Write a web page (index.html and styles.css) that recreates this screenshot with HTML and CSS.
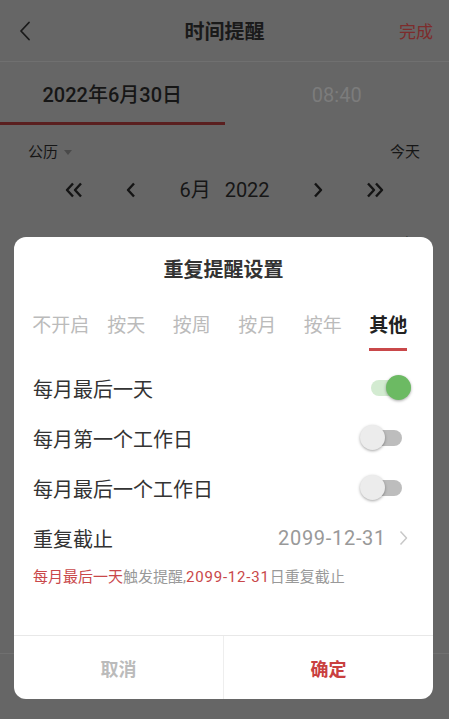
FILE: index.html
```html
<!DOCTYPE html>
<html lang="zh-CN">
<head>
    <meta charset="UTF-8">
    <meta name="viewport" content="width=device-width, initial-scale=1.0">
    <title>时间提醒</title>
    <link rel="stylesheet" href="styles.css">
</head>
<body>
    <div class="page">
        <header class="topbar">
            <span class="back">
                <svg width="12" height="20" viewBox="0 0 12 20"><path d="M10 1.5 L2 10 L10 18.5" fill="none" stroke="#1a1a1a" stroke-width="1.8" stroke-linecap="round" stroke-linejoin="round"/></svg>
            </span>
            <h1>时间提醒</h1>
            <a class="done" href="#">完成</a>
        </header>

        <div class="datetabs">
            <div class="datetab active">2022年6月30日</div>
            <div class="datetab">08:40</div>
        </div>

        <div class="calbar">
            <span class="cal-type">公历 <i class="caret"></i></span>
            <span>今天</span>
        </div>

        <div class="monthnav">
            <svg width="18" height="16" viewBox="0 0 18 16"><path d="M8 1.5 L2 8 L8 14.5 M16 1.5 L10 8 L16 14.5" fill="none" stroke="#141414" stroke-width="2.4" stroke-linejoin="round"/></svg>
            <svg width="10" height="16" viewBox="0 0 10 16"><path d="M8 1.5 L2 8 L8 14.5" fill="none" stroke="#141414" stroke-width="2.4" stroke-linejoin="round"/></svg>
            <span class="month-label"><span>6月</span><span>2022</span></span>
            <svg width="10" height="16" viewBox="0 0 10 16"><path d="M2 1.5 L8 8 L2 14.5" fill="none" stroke="#141414" stroke-width="2.4" stroke-linejoin="round"/></svg>
            <svg width="18" height="16" viewBox="0 0 18 16"><path d="M2 1.5 L8 8 L2 14.5 M10 1.5 L16 8 L10 14.5" fill="none" stroke="#141414" stroke-width="2.4" stroke-linejoin="round"/></svg>
        </div>

        <div class="weekdays">
            <span>日</span><span>一</span><span>二</span><span>三</span><span>四</span><span>五</span><span>六</span>
        </div>
        <div class="calgrid"></div>
    </div>

    <!-- 重复提醒弹窗 -->
    <div class="dialog">
        <div class="dialog-title">重复提醒设置</div>

        <div class="repeat-tabs">
            <div class="repeat-tab"><span>不开启</span></div>
            <div class="repeat-tab"><span>按天</span></div>
            <div class="repeat-tab"><span>按周</span></div>
            <div class="repeat-tab"><span>按月</span></div>
            <div class="repeat-tab"><span>按年</span></div>
            <div class="repeat-tab active"><span>其他</span></div>
        </div>

        <div class="settings">
            <div class="setting-row">
                <span>每月最后一天</span>
                <span class="switch on"><i class="track"></i><i class="knob"></i></span>
            </div>
            <div class="setting-row">
                <span>每月第一个工作日</span>
                <span class="switch"><i class="track"></i><i class="knob"></i></span>
            </div>
            <div class="setting-row">
                <span>每月最后一个工作日</span>
                <span class="switch"><i class="track"></i><i class="knob"></i></span>
            </div>
            <div class="setting-row end-row">
                <span>重复截止</span>
                <span class="end-date"><span class="num">2099-12-31</span>
                    <svg width="9" height="16" viewBox="0 0 9 16"><path d="M1.5 1.5 L7.5 8 L1.5 14.5" fill="none" stroke="#c8c8c8" stroke-width="1.5" stroke-linejoin="round"/></svg>
                </span>
            </div>
        </div>

        <p class="hint"><em>每月最后一天</em>触发提醒,<em class="num">2099-12-31</em>日重复截止</p>

        <div class="dialog-actions">
            <button class="btn-cancel">取消</button>
            <button class="btn-ok">确定</button>
        </div>
    </div>
</body>
</html>
```

FILE: styles.css
```css
/* 背景页面（已被遮罩压暗） */
body {
    font-family: Roboto, "Noto Sans CJK SC", sans-serif;
    margin: 0;
    padding: 0;
    background-color: #666;
    color: #161616;
    width: 449px;
    height: 719px;
    overflow: hidden;
}
.topbar {
    height: 61px;
    border-bottom: 1px solid #707070;
    display: grid;
    grid-template-columns: 1fr auto 1fr;
    align-items: center;
}
.back {
    padding-left: 19px;
    display: flex;
}
.topbar h1 {
    font-size: 20px;
    font-weight: 700;
    margin: 0;
    color: #1a1a1a;
}
.done {
    justify-self: end;
    padding-right: 16px;
    font-size: 17px;
    color: #7d2c2c;
    text-decoration: none;
}
.datetabs {
    display: flex;
}
.datetab {
    flex: 1;
    text-align: center;
    padding-top: 6px;
    line-height: 54px;
    font-size: 20px;
    color: #7c7c7c;
    border-bottom: 3px solid transparent;
}
.datetab.active {
    color: #161616;
    font-weight: 500;
    border-bottom-color: #5a1f1f;
}
.calbar {
    display: flex;
    justify-content: space-between;
    padding: 17px 29px 0 28px;
    font-size: 15px;
    line-height: 20px;
    color: #161616;
}
.cal-type {
    display: flex;
    align-items: center;
    gap: 6px;
}
.caret {
    width: 0;
    height: 0;
    border-left: 4px solid transparent;
    border-right: 4px solid transparent;
    border-top: 5px solid #4a4a4a;
}
.monthnav {
    margin-top: 14px;
    height: 28px;
    display: flex;
    justify-content: center;
    align-items: center;
    gap: 43px;
}
.month-label {
    display: flex;
    gap: 14px;
    font-size: 20px;
    line-height: 28px;
    color: #161616;
}
.weekdays {
    margin-top: 30px;
    padding-left: 11px;
    display: grid;
    grid-template-columns: repeat(7, 61px);
    font-size: 15px;
    line-height: 20px;
    text-align: center;
    color: #2a2a2a;
}
.calgrid {
    height: 399px;
    border-bottom: 1px solid #707070;
}

/* 弹窗 */
.dialog {
    position: absolute;
    left: 14px;
    top: 237px;
    width: 419px;
    height: 462px;
    background-color: #fff;
    border-radius: 12px;
    display: flex;
    flex-direction: column;
    overflow: hidden;
}
.dialog-title {
    padding-top: 20px;
    line-height: 26px;
    font-size: 20px;
    font-weight: 700;
    text-align: center;
    color: #333;
}
.repeat-tabs {
    margin-top: 30px;
    padding: 0 12px 0 14px;
    display: flex;
}
.repeat-tab {
    flex: 1;
    text-align: center;
    font-size: 19px;
    color: #bbb;
}
.repeat-tab span {
    display: inline-block;
    line-height: 26px;
    padding-bottom: 9px;
    border-bottom: 3px solid transparent;
}
.repeat-tab.active {
    color: #222;
    font-weight: 700;
}
.repeat-tab.active span {
    border-bottom-color: #c9484a;
}
.settings {
    margin-top: 12px;
}
.setting-row {
    height: 50px;
    display: flex;
    align-items: center;
    justify-content: space-between;
    padding: 0 21px 0 19px;
    font-size: 20px;
    color: #333;
}
.switch {
    position: relative;
    width: 52px;
    height: 26px;
}
.switch .track {
    position: absolute;
    left: 2px;
    top: 5px;
    width: 40px;
    height: 16px;
    border-radius: 8px;
    background-color: #bdbdbd;
}
.switch .knob {
    position: absolute;
    left: 0;
    top: 0;
    width: 25px;
    height: 25px;
    border-radius: 50%;
    background-color: #ececec;
    box-shadow: 0 1px 3px rgba(0, 0, 0, 0.35);
}
.switch.on .track {
    left: 11px;
    background-color: #d3ebd1;
}
.switch.on .knob {
    left: auto;
    right: 1px;
    top: 0;
    background-color: #6cba63;
}
.end-row {
    padding-right: 25px;
}
.end-date {
    display: flex;
    align-items: center;
    gap: 13px;
    color: #999;
}
.end-date .num {
    letter-spacing: 0.7px;
}
.hint {
    margin: 4px 0 0;
    padding: 0 19px;
    font-size: 15px;
    line-height: 20px;
    color: #999;
}
.hint em {
    font-style: normal;
    color: #c9484a;
}
.hint .num {
    letter-spacing: 0.8px;
}
.dialog-actions {
    margin-top: auto;
    height: 63px;
    border-top: 1px solid #e8e8e8;
    display: flex;
}
.dialog-actions button {
    flex: 1;
    border: none;
    background: none;
    font-family: inherit;
    font-size: 18px;
    font-weight: 700;
    cursor: pointer;
}
.btn-cancel {
    color: #bbb;
    border-right: 1px solid #eee !important;
}
.btn-ok {
    color: #c9403f;
}
```
